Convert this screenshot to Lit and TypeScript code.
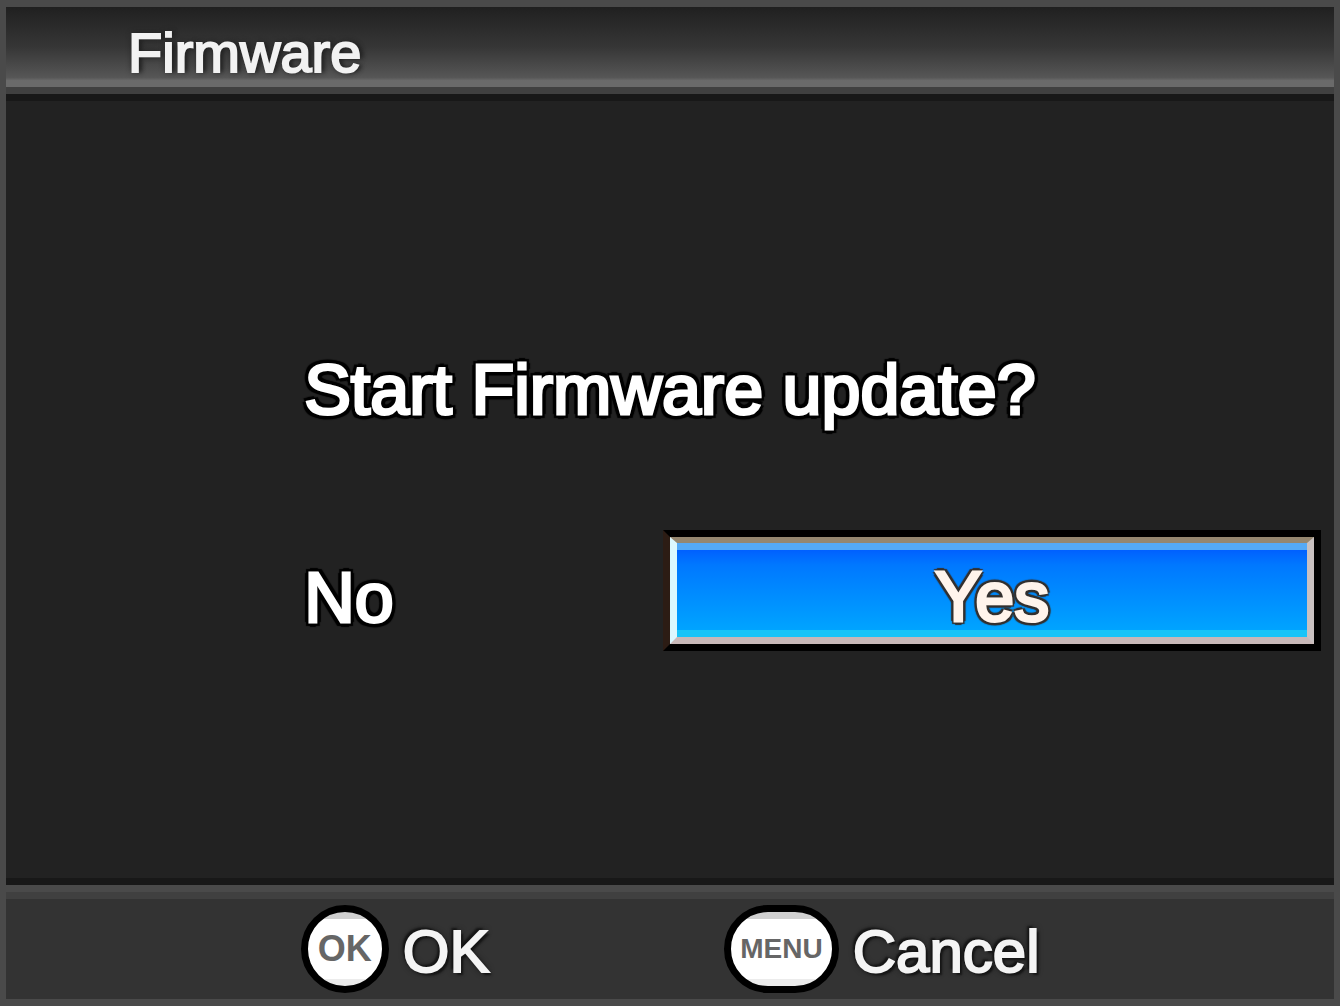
import { LitElement, html, css } from "lit";
import { customElement, property, state } from "lit/decorators.js";

type Choice = "no" | "yes";

/** Round key symbol followed by the action that the key performs. */
@customElement("key-hint")
export class KeyHint extends LitElement {
  @property() symbol = "";
  @property() label = "";

  static styles = css`
    :host {
      display: flex;
      min-width: 0;
    }
    .hint {
      display: flex;
      align-items: center;
      gap: 14px;
      padding: 0;
      border: 0;
      background: none;
      font: 60px/72px "Liberation Sans", Arial, sans-serif;
      color: #f4f4f4;
      cursor: pointer;
    }
    .key {
      box-sizing: border-box;
      min-width: 88px;
      padding: 0 9px;
      border: 7px solid #000;
      border-radius: 44px;
      background: linear-gradient(#d0d0d0 0 7px, #fff 7px 67px, #ececec 67px);
      color: #666;
      font: bold 36px/74px "Liberation Sans", Arial, sans-serif;
      text-align: center;
    }
    .key.wide {
      font-size: 28px;
    }
    .text {
      padding-top: 6px;
      -webkit-text-stroke: 2px #f4f4f4;
      text-shadow: 0 0 6px #111, 3px 3px 2px #181818, -3px -3px 2px #181818;
    }
  `;

  render() {
    return html`
      <button class="hint" type="button">
        <span class="key ${this.symbol.length > 2 ? "wide" : ""}">${this.symbol}</span>
        <span class="text">${this.label}</span>
      </button>
    `;
  }
}

@customElement("app-root")
export class AppRoot extends LitElement {
  @state() private selected: Choice = "yes";

  static styles = css`
    :host {
      display: block;
      font-family: "Liberation Sans", Arial, sans-serif;
      color: #fff;
    }
    .screen {
      box-sizing: border-box;
      display: flex;
      flex-direction: column;
      min-height: 100vh;
      border: solid #4a4a4a;
      border-width: 7px 6px;
      background: #222;
    }
    .header {
      padding: 14px 0 2px 122px;
      border-bottom: 7px solid #404040;
      background: linear-gradient(#202020, #363636 50%, #565656 88%, #6a6a6a 92%);
      background-clip: padding-box;
    }
    .title {
      margin: 0;
      font-size: 56px;
      font-weight: normal;
      line-height: 64px;
      color: #f2f2f2;
      -webkit-text-stroke: 2px #f2f2f2;
      text-shadow: 0 0 6px #222, 4px 0 4px #222;
    }
    .body {
      flex: 1;
      display: flex;
      flex-direction: column;
      justify-content: center;
      gap: 100px;
      padding: 22px 13px 0 22%;
      border: solid #181818;
      border-width: 7px 0;
    }
    .message,
    .choice {
      font-size: 70px;
      line-height: 80px;
      -webkit-text-stroke: 3px #fff;
      text-shadow: 5px 0 1px #000, -5px 0 1px #000, 0 5px 1px #000,
        0 -5px 1px #000, 4px 4px 1px #000, -4px 4px 1px #000,
        4px -4px 1px #000, -4px -4px 1px #000;
    }
    .message {
      margin: 0;
      padding-left: 6px;
    }
    .choices {
      display: grid;
      grid-template-columns: 365fr 658fr;
      min-height: 121px;
    }
    .choice {
      padding: 14px 6px 0;
      border: 0;
      background: none;
      color: #fff;
      font-family: inherit;
      text-align: left;
      cursor: pointer;
    }
    .choice.selected {
      padding: 0;
      border: 7px solid #000;
      border-left-color: #2c1c14;
      text-align: center;
      color: #fff4ec;
      -webkit-text-stroke-color: #fff4ec;
      text-shadow: 4px 0 1px #33302f, -4px 0 1px #33302f, 0 4px 1px #33302f,
        0 -4px 1px #33302f, 3px 3px 1px #33302f, -3px 3px 1px #33302f,
        3px -3px 1px #33302f, -3px -3px 1px #33302f;
    }
    .fill {
      box-sizing: border-box;
      display: flex;
      align-items: center;
      justify-content: center;
      height: 100%;
      padding-top: 14px;
      border: solid;
      border-width: 6px 7px 7px;
      border-color: #958770 #c8c0c0 #c8b8b8 #dcf8ff;
      background: linear-gradient(
        #55aaf6 0 7px,
        #0060ff 7px,
        #0078ff 22px,
        #00a4ff 87px,
        #18c4f8 87px
      );
    }
    .footer {
      display: grid;
      grid-template-columns: 423fr 609fr;
      align-items: center;
      padding: 13px 0 6px 22.2%;
      border-top: 7px solid #4a4a4a;
      background: linear-gradient(#404040 0 7px, #333 7px);
    }
  `;

  private renderChoice(value: Choice, label: string) {
    const active = this.selected === value;
    return html`
      <button
        class="choice ${active ? "selected" : ""}"
        type="button"
        aria-pressed=${active}
        @click=${() => (this.selected = value)}
      >
        ${active ? html`<span class="fill">${label}</span>` : label}
      </button>
    `;
  }

  render() {
    return html`
      <div class="screen">
        <header class="header"><h1 class="title">Firmware</h1></header>
        <main class="body">
          <p class="message">Start Firmware update?</p>
          <div class="choices">
            ${this.renderChoice("no", "No")} ${this.renderChoice("yes", "Yes")}
          </div>
        </main>
        <footer class="footer">
          <key-hint symbol="OK" label="OK"></key-hint>
          <key-hint symbol="MENU" label="Cancel"></key-hint>
        </footer>
      </div>
    `;
  }
}
